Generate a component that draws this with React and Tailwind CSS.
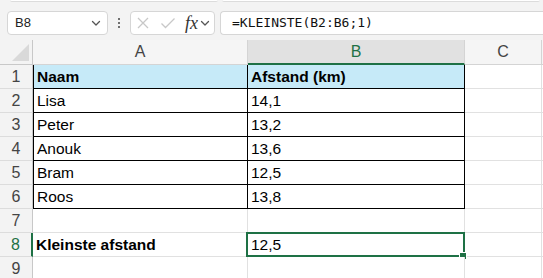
import React from "react";

const rows = [
  { a: "Naam", b: "Afstand (km)", header: true },
  { a: "Lisa", b: "14,1" },
  { a: "Peter", b: "13,2" },
  { a: "Anouk", b: "13,6" },
  { a: "Bram", b: "12,5" },
  { a: "Roos", b: "13,8" },
  { a: "", b: "", empty: true },
  { a: "Kleinste afstand", b: "12,5", sel: true },
  { a: "", b: "", empty: true },
];

function Chevron({ className }) {
  return (
    <svg className={className} width="12" height="12" viewBox="0 0 12 12" fill="none">
      <path d="M2.5 4.5 L6 8 L9.5 4.5" stroke="#555" strokeWidth="1.3" strokeLinecap="round" strokeLinejoin="round" />
    </svg>
  );
}

export default function App() {
  return (
    <div className="w-[543px] h-[278px] overflow-hidden bg-[#f3f3f3]" style={{ fontFamily: '"Liberation Sans", Arial, sans-serif' }}>
      {/* top strip */}
      <div className="flex h-[3px] gap-[4px] pl-[10px] pr-[3px]">
        <div className="w-[208px] h-[2px] bg-white border-b border-[#dcdcdc] rounded-b-[3px]" />
        <div className="flex-1 h-[2px] bg-white border-b border-[#dcdcdc] rounded-b-[3px]" />
      </div>
      {/* formula bar */}
      <div className="flex items-center h-[37px] pt-[4px] pb-[2px] pl-[7px]">
        <div className="w-[101px] h-[24px] bg-white border border-[#d6d6d6] rounded-[4px] flex items-center justify-between pl-[7px] pr-[5px]">
          <span className="text-[13px] text-[#222]">B8</span>
          <Chevron />
        </div>
        <div className="w-[22px] flex flex-col items-center justify-center gap-[2px]">
          <span className="w-[2px] h-[2px] bg-[#444] rounded-full" />
          <span className="w-[2px] h-[2px] bg-[#444] rounded-full" />
          <span className="w-[2px] h-[2px] bg-[#444] rounded-full" />
        </div>
        <div className="w-[85px] h-[24px] bg-white border border-[#d6d6d6] rounded-[4px] flex items-center pl-[5px]">
          <svg width="14" height="14" viewBox="0 0 14 14" className="mr-[10px]">
            <path d="M2 2 L12 12 M12 2 L2 12" stroke="#c8c8c8" strokeWidth="1.3" />
          </svg>
          <svg width="16" height="14" viewBox="0 0 16 14" className="mr-[9px]">
            <path d="M1.5 7.5 L5.5 11.5 L14.5 2.5" stroke="#c8c8c8" strokeWidth="1.3" fill="none" />
          </svg>
          <span className="text-[18px] italic text-[#333] leading-none" style={{ fontFamily: '"Liberation Serif", "Times New Roman", serif' }}>fx</span>
          <Chevron className="ml-[1px]" />
        </div>
        <div className="ml-[5px] flex-1 h-[24px] bg-white border border-r-0 border-[#d6d6d6] rounded-l-[4px] flex items-center pl-[11px]">
          <span className="text-[13px] text-[#111]" style={{ fontFamily: '"DejaVu Sans Mono", monospace' }}>=KLEINSTE(B2:B6;1)</span>
        </div>
      </div>
      {/* grid */}
      <div className="grid grid-cols-[33px_215px_217px_77px_1px]">
        {/* header row */}
        <div className="h-[25px] bg-[#f3f3f3] border-r border-b border-[#c8c8c8] relative">
          <svg className="absolute right-[3px] bottom-[3px]" width="17" height="17" viewBox="0 0 17 17">
            <path d="M17 0 L17 17 L0 17 Z" fill="#d9d9d9" />
          </svg>
        </div>
        <div className="h-[25px] bg-[#f5f5f5] border-r border-b border-[#d4d4d4] flex items-center justify-center text-[16px] text-[#444]">A</div>
        <div className="h-[25px] bg-[#e1e1e1] border-r border-[#d4d4d4] border-b-2 border-b-[#1e7145] flex items-center justify-center text-[16px] text-[#1e7145]">B</div>
        <div className="h-[25px] bg-[#f5f5f5] border-r border-b border-[#d4d4d4] flex items-center justify-center text-[16px] text-[#444]">C</div>
        <div className="h-[25px] bg-[#f5f5f5] border-b border-[#d4d4d4]" />
        {rows.map((r, i) => {
          const inTable = i <= 5;
          const rowH = "h-[24px]";
          return (
            <React.Fragment key={i}>
              <div
                className={`${rowH} flex items-center justify-center text-[16px] bg-[#f3f3f3] border-b border-[#dcdcdc] ${
                  r.sel ? "border-r-2 border-r-[#1e7145] text-[#1e7145] bg-[#e1e1e1]" : "border-r border-r-[#c8c8c8] text-[#444]"
                }`}
              >
                {i + 1}
              </div>
              <div
                className={`${rowH} flex items-center pt-[1px] pl-[3px] text-[15.5px] text-black ${
                  inTable ? "border-l border-l-black border-r border-r-black border-b border-b-black" : "border-r border-b border-[#e1e1e1]"
                } ${r.header ? "bg-[#c6eaf8] font-bold" : "bg-white"} ${r.sel ? "font-bold" : ""}`}
              >
                {r.a}
              </div>
              <div
                className={`${rowH} relative flex items-center pt-[1px] pl-[3px] text-[15.5px] text-black ${
                  inTable ? "border-r border-r-black border-b border-b-black" : "border-r border-b border-[#e1e1e1]"
                } ${r.header ? "bg-[#c6eaf8] font-bold" : "bg-white"}`}
              >
                {r.b}
                {r.sel && (
                  <>
                    <div className="absolute left-[-2px] top-[-1px] right-[-1px] bottom-[-1px] border-2 border-[#1e7145] pointer-events-none" />
                    <div className="absolute right-[-3px] bottom-[-4px] w-[8px] h-[8px] bg-[#1e7145] border border-white" />
                  </>
                )}
              </div>
              <div className={`${rowH} bg-white border-r border-b border-[#e1e1e1]`} />
              <div className={`${rowH} bg-white border-b border-[#e1e1e1]`} />
            </React.Fragment>
          );
        })}
      </div>
    </div>
  );
}
